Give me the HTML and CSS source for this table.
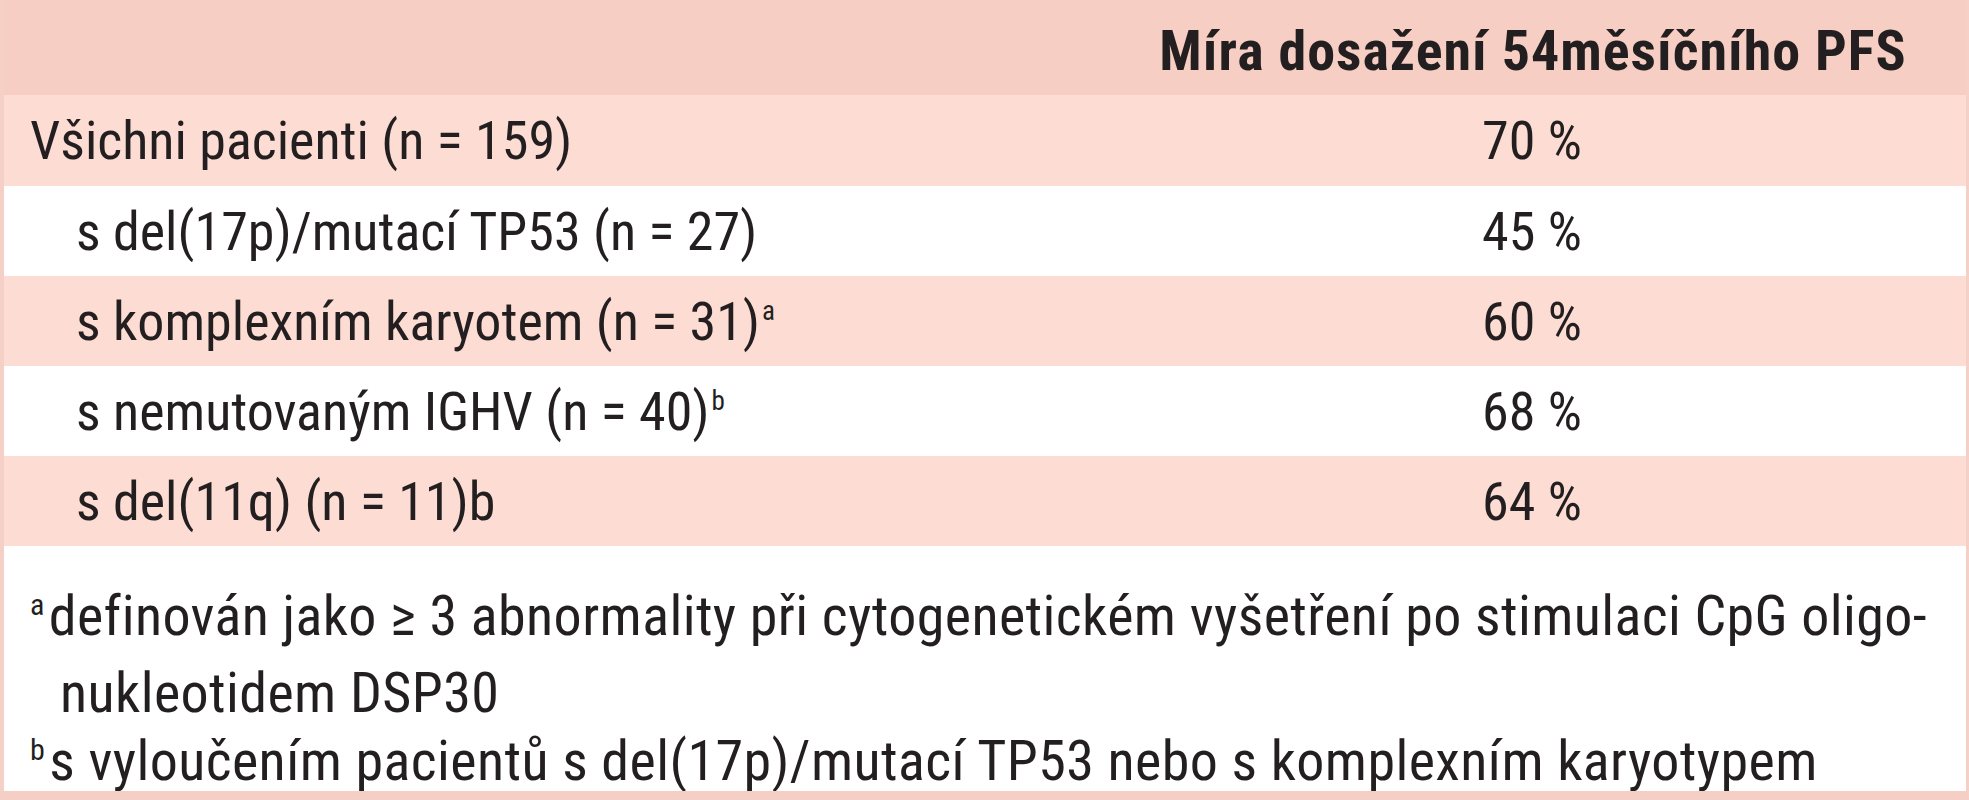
FILE: index.html
```html
<!DOCTYPE html>
<html lang="cs">
<head>
<meta charset="utf-8">
<link rel="stylesheet" href="styles.css">
</head>
<body>
<div class="tbl">
  <div class="row head">
    <div class="c1"></div>
    <div class="c2 hd">Míra dosažení 54měsíčního PFS</div>
  </div>
  <div class="row pink first">
    <div class="c1">Všichni pacienti (n = 159)</div>
    <div class="c2 val">70 %</div>
  </div>
  <div class="row">
    <div class="c1 sub">s del(17p)/mutací TP53 (n = 27)</div>
    <div class="c2 val">45 %</div>
  </div>
  <div class="row pink">
    <div class="c1 sub">s komplexním karyotem (n = 31)<sup class="sp">a</sup></div>
    <div class="c2 val">60 %</div>
  </div>
  <div class="row">
    <div class="c1 sub">s nemutovaným IGHV (n = 40)<sup class="sp">b</sup></div>
    <div class="c2 val">68 %</div>
  </div>
  <div class="row pink">
    <div class="c1 sub">s del(11q) (n = 11)b</div>
    <div class="c2 val">64 %</div>
  </div>
  <div class="notes">
    <p class="note"><sup class="nsp">a</sup>definován jako ≥ 3 abnormality při cytogenetickém vyšetření po stimulaci CpG oligo-<br><span class="cont">nukleotidem DSP30</span></p>
    <p class="note"><sup class="nsp">b</sup>s vyloučením pacientů s del(17p)/mutací TP53 nebo s komplexním karyotypem</p>
  </div>
</div>
</body>
</html>
```
FILE: styles.css
```css
html, body {
  margin: 0;
  padding: 0;
  background: #ffffff;
}
body {
  font-family: "Roboto Condensed", "Liberation Sans", sans-serif;
  color: #231f20;
}
.tbl {
  width: 1969px;
  height: 800px;
  box-sizing: border-box;
  border-left: 4px solid #f4d0c7;
  border-right: 3px solid #f4d0c7;
  border-bottom: 9px solid #f5cfc6;
  background: #ffffff;
  overflow: hidden;
}
.row {
  display: grid;
  grid-template-columns: 1096px 1fr;
  align-items: center;
  height: 90px;
  font-size: 54px;
}
.row.head {
  height: 95px;
  background: #f7cec3;
  margin-left: -4px;
  margin-right: -3px;
  padding-left: 4px;
  padding-right: 3px;
}
.row.first {
  height: 91px;
}
.row.pink {
  background: #fcdcd3;
}
.c1 {
  padding-left: 26px;
  white-space: nowrap;
}
.c1.sub {
  padding-left: 72px;
}
.c2 {
  text-align: center;
  white-space: nowrap;
}
.hd {
  font-weight: 700;
  font-size: 56px;
  letter-spacing: 1px;
  padding-top: 6px;
}
.val {
  padding-right: 2px;
}
.sp {
  font-size: 27px;
  vertical-align: 0;
  position: relative;
  top: -20px;
  margin-left: 2px;
}
.notes {
  padding-top: 36px;
  padding-left: 26px;
}
.note {
  margin: 0;
  font-size: 56px;
  line-height: 68px;
  letter-spacing: 0.4px;
  white-space: nowrap;
}
.nsp {
  font-size: 30px;
  vertical-align: 0;
  position: relative;
  top: -20px;
  margin-right: 4px;
}
.cont {
  padding-left: 30px;
}
```
